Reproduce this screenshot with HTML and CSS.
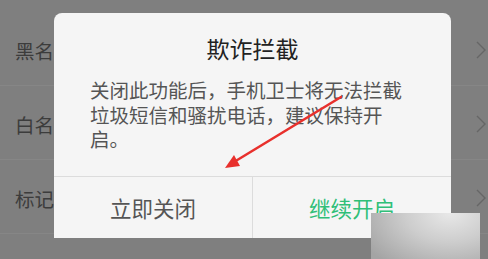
FILE: index.html
```html
<!DOCTYPE html>
<html lang="zh">
<head>
<meta charset="utf-8">
<link rel="stylesheet" href="styles.css">
</head>
<body>
<div class="screen">
  <ul class="list">
    <li class="row"><span class="row-label">黑名单</span><svg class="chev" width="12" height="18" viewBox="0 0 12 18"><polyline points="2,1 10,9 2,17" /></svg></li>
    <li class="row"><span class="row-label">白名单</span><svg class="chev" width="12" height="18" viewBox="0 0 12 18"><polyline points="2,1 10,9 2,17" /></svg></li>
    <li class="row"><span class="row-label">标记号码</span><svg class="chev" width="12" height="18" viewBox="0 0 12 18"><polyline points="2,1 10,9 2,17" /></svg></li>
  </ul>

  <div class="dialog">
    <h1 class="dialog-title">欺诈拦截</h1>
    <p class="dialog-body">关闭此功能后，手机卫士将无法拦截<br>垃圾短信和骚扰电话，建议保持开<br>启。</p>
    <div class="dialog-spacer"></div>
    <div class="dialog-actions">
      <button class="btn btn-close">立即关闭</button>
      <button class="btn btn-keep">继续开启</button>
    </div>
  </div>

  <svg class="arrow" width="488" height="259" viewBox="0 0 488 259">
    <line x1="341" y1="97" x2="234" y2="162" />
    <polygon points="225,168 240,166 234,155" />
  </svg>

  <div class="watermark"></div>
</div>
</body>
</html>
```

FILE: styles.css
```css
* { box-sizing: border-box; }
html, body {
  margin: 0;
  padding: 0;
}
body {
  width: 488px;
  height: 259px;
  overflow: hidden;
  background: #7f7f7f;
  font-family: "Noto Sans CJK SC", "Noto Sans", sans-serif;
}
.screen {
  position: relative;
  width: 488px;
  height: 259px;
  overflow: hidden;
  background: #7f7f7f;
}
.list {
  list-style: none;
  margin: 0;
  padding: 12px 0 0 0;
}
.row {
  height: 74px;
  border-bottom: 1px solid #868686;
  display: flex;
  align-items: center;
  justify-content: space-between;
  padding: 3px 1px 0 15px;
}
.row-label {
  font-size: 19.5px;
  color: #3c3c3c;
  white-space: nowrap;
}
.chev polyline {
  fill: none;
  stroke: #666666;
  stroke-width: 1.4;
}
.dialog {
  position: absolute;
  left: 54px;
  top: 13px;
  width: 397px;
  height: 225px;
  background: #f5f5f5;
  border-radius: 8px 8px 0 0;
  display: flex;
  flex-direction: column;
}
.dialog-title {
  margin: 20px 0 0 0;
  font-size: 23px;
  line-height: 30px;
  font-weight: normal;
  text-align: center;
  color: #222222;
}
.dialog-body {
  margin: 15px 0 0 36px;
  font-size: 19.5px;
  line-height: 24.5px;
  color: #555555;
}
.dialog-spacer { flex: 1; }
.dialog-actions {
  height: 62px;
  border-top: 1px solid #dcdcdc;
  display: flex;
}
.btn {
  flex: 1;
  border: 0;
  background: transparent;
  font-family: inherit;
  font-size: 21.5px;
  padding: 0;
  margin: 0;
}
.btn-close {
  color: #555555;
  border-right: 1px solid #dcdcdc;
}
.btn-keep {
  color: #2fbf78;
}
.arrow {
  position: absolute;
  left: 0;
  top: 0;
}
.arrow line {
  stroke: #e8302c;
  stroke-width: 2.6;
  stroke-linecap: round;
}
.arrow polygon {
  fill: #e8302c;
}
.watermark {
  position: absolute;
  left: 371px;
  top: 213px;
  width: 109px;
  height: 46px;
  background: radial-gradient(ellipse 90% 140% at 72% 0%, #e8e8e8 0%, #cdcdcd 45%, #a4a4a4 100%);
}
```
